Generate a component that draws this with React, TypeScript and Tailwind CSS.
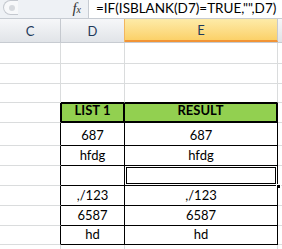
const cellFont = { fontFamily: "Lato, 'Open Sans', sans-serif" };

type Row = { h: string; d?: string; e?: string; kind: "blank" | "top" | "head" | "data" | "after"; selected?: boolean };

const rows: Row[] = [
  { h: "h-[21px]", kind: "blank" },
  { h: "h-[20px]", kind: "blank" },
  { h: "h-[19px]", kind: "top" },
  { h: "h-[20px]", kind: "head", d: "LIST 1", e: "RESULT" },
  { h: "h-[23px]", kind: "data", d: "687", e: "687" },
  { h: "h-[20px]", kind: "data", d: "hfdg", e: "hfdg" },
  { h: "h-[20px]", kind: "data", d: "", e: "", selected: true },
  { h: "h-[20px]", kind: "data", d: ",/123", e: ",/123" },
  { h: "h-[20px]", kind: "data", d: "6587", e: "6587" },
  { h: "h-[19px]", kind: "data", d: "hd", e: "hd" },
  { h: "h-[10px]", kind: "after" },
];

function SheetRow({ row }: { row: Row }) {
  const inTable = row.kind === "head" || row.kind === "data";
  const cBorder = inTable ? "border-r-black" : "border-r-[#dadcdd]";
  const dBottom = row.kind === "blank" || row.kind === "after" ? "border-b-[#dadcdd]" : "border-b-black";
  const side = inTable ? "border-r-black" : "border-r-[#dadcdd]";
  const head = row.kind === "head";
  return (
    <div className={`flex shrink-0 ${row.h}`}>
      <div className={`w-[61px] shrink-0 border-b border-r border-b-[#dadcdd] ${cBorder}`} />
      <div
        className={`w-[64px] shrink-0 flex items-end justify-center pb-[3px] text-[13px] leading-none text-black ${dBottom} ${side} ${
          head ? "border-t border-l border-b-2 border-r-2 border-t-black border-l-black bg-[#92d050] font-bold pb-[4px]" : "border-b border-r"
        }`}
        style={cellFont}
      >
        {row.d}
      </div>
      <div
        className={`relative w-[153px] shrink-0 flex items-end justify-center pb-[3px] text-[13px] leading-none text-black ${dBottom} ${side} ${
          head ? "border-t border-b-2 border-r-2 border-t-black bg-[#92d050] font-bold pb-[4px]" : "border-b border-r"
        }`}
        style={cellFont}
      >
        {row.e}
        {row.selected && (
          <>
            <div className="absolute inset-0 border border-white">
              <div className="h-full w-full border border-black" />
            </div>
            <div className="absolute -right-[4px] -bottom-[4px] w-[5px] h-[5px] bg-black border border-white" />
          </>
        )}
      </div>
      <div className="flex-1 border-b border-b-[#dadcdd]" />
    </div>
  );
}

export default function App() {
  return (
    <div className="w-[282px] h-[249px] overflow-hidden bg-white flex flex-col">
      {/* formula bar */}
      <div className="h-[19px] shrink-0 flex border-b border-[#c6cbd2] bg-[#eef1f5]">
        <div className="w-[88px] shrink-0 flex items-start">
          <div className="ml-[3px] w-[15px] h-[15px] rounded-l-full border border-[#c4c8cf] border-r-0 bg-[#f7f8fa] flex items-center pl-[5px]">
            <div className="w-[6px] h-[6px] rounded-full bg-[#d6d9de]" />
          </div>
          <div className="ml-auto mr-[7px] mt-[1px] flex items-baseline text-[#333]" style={{ fontFamily: "'Liberation Serif', serif" }}>
            <span className="italic text-[15px] leading-none">f</span>
            <span className="italic text-[10px] leading-none">x</span>
          </div>
        </div>
        <div
          className="flex-1 bg-white border-l border-[#c6cbd2] pl-[7px] pt-[1px] text-[13.5px] leading-[15px] text-black whitespace-nowrap"
          style={cellFont}
        >
          =IF(ISBLANK(D7)=TRUE,"",D7)
        </div>
      </div>

      {/* column headers */}
      <div className="h-[24px] shrink-0 flex border-b border-[#c7cbd1] text-[13px] text-[#1e395b]" style={cellFont}>
        <div className="w-[61px] shrink-0 flex items-center justify-center pt-[3px] border-r border-[#c5c9cf] bg-gradient-to-b from-[#f6f7f9] to-[#e1e4e8]">C</div>
        <div className="w-[64px] shrink-0 flex items-center justify-center pt-[3px] border-r border-[#f2b65e] bg-gradient-to-b from-[#f6f7f9] to-[#e1e4e8]">D</div>
        <div className="w-[153px] shrink-0 flex items-center justify-center pt-[3px] border-r border-[#c5c9cf] border-b-2 border-b-[#f29436] bg-gradient-to-b from-[#fdeba8] to-[#fbd168]">E</div>
        <div className="flex-1 bg-gradient-to-b from-[#f6f7f9] to-[#e1e4e8]" />
      </div>

      {rows.map((r, i) => (
        <SheetRow key={i} row={r} />
      ))}
    </div>
  );
}
